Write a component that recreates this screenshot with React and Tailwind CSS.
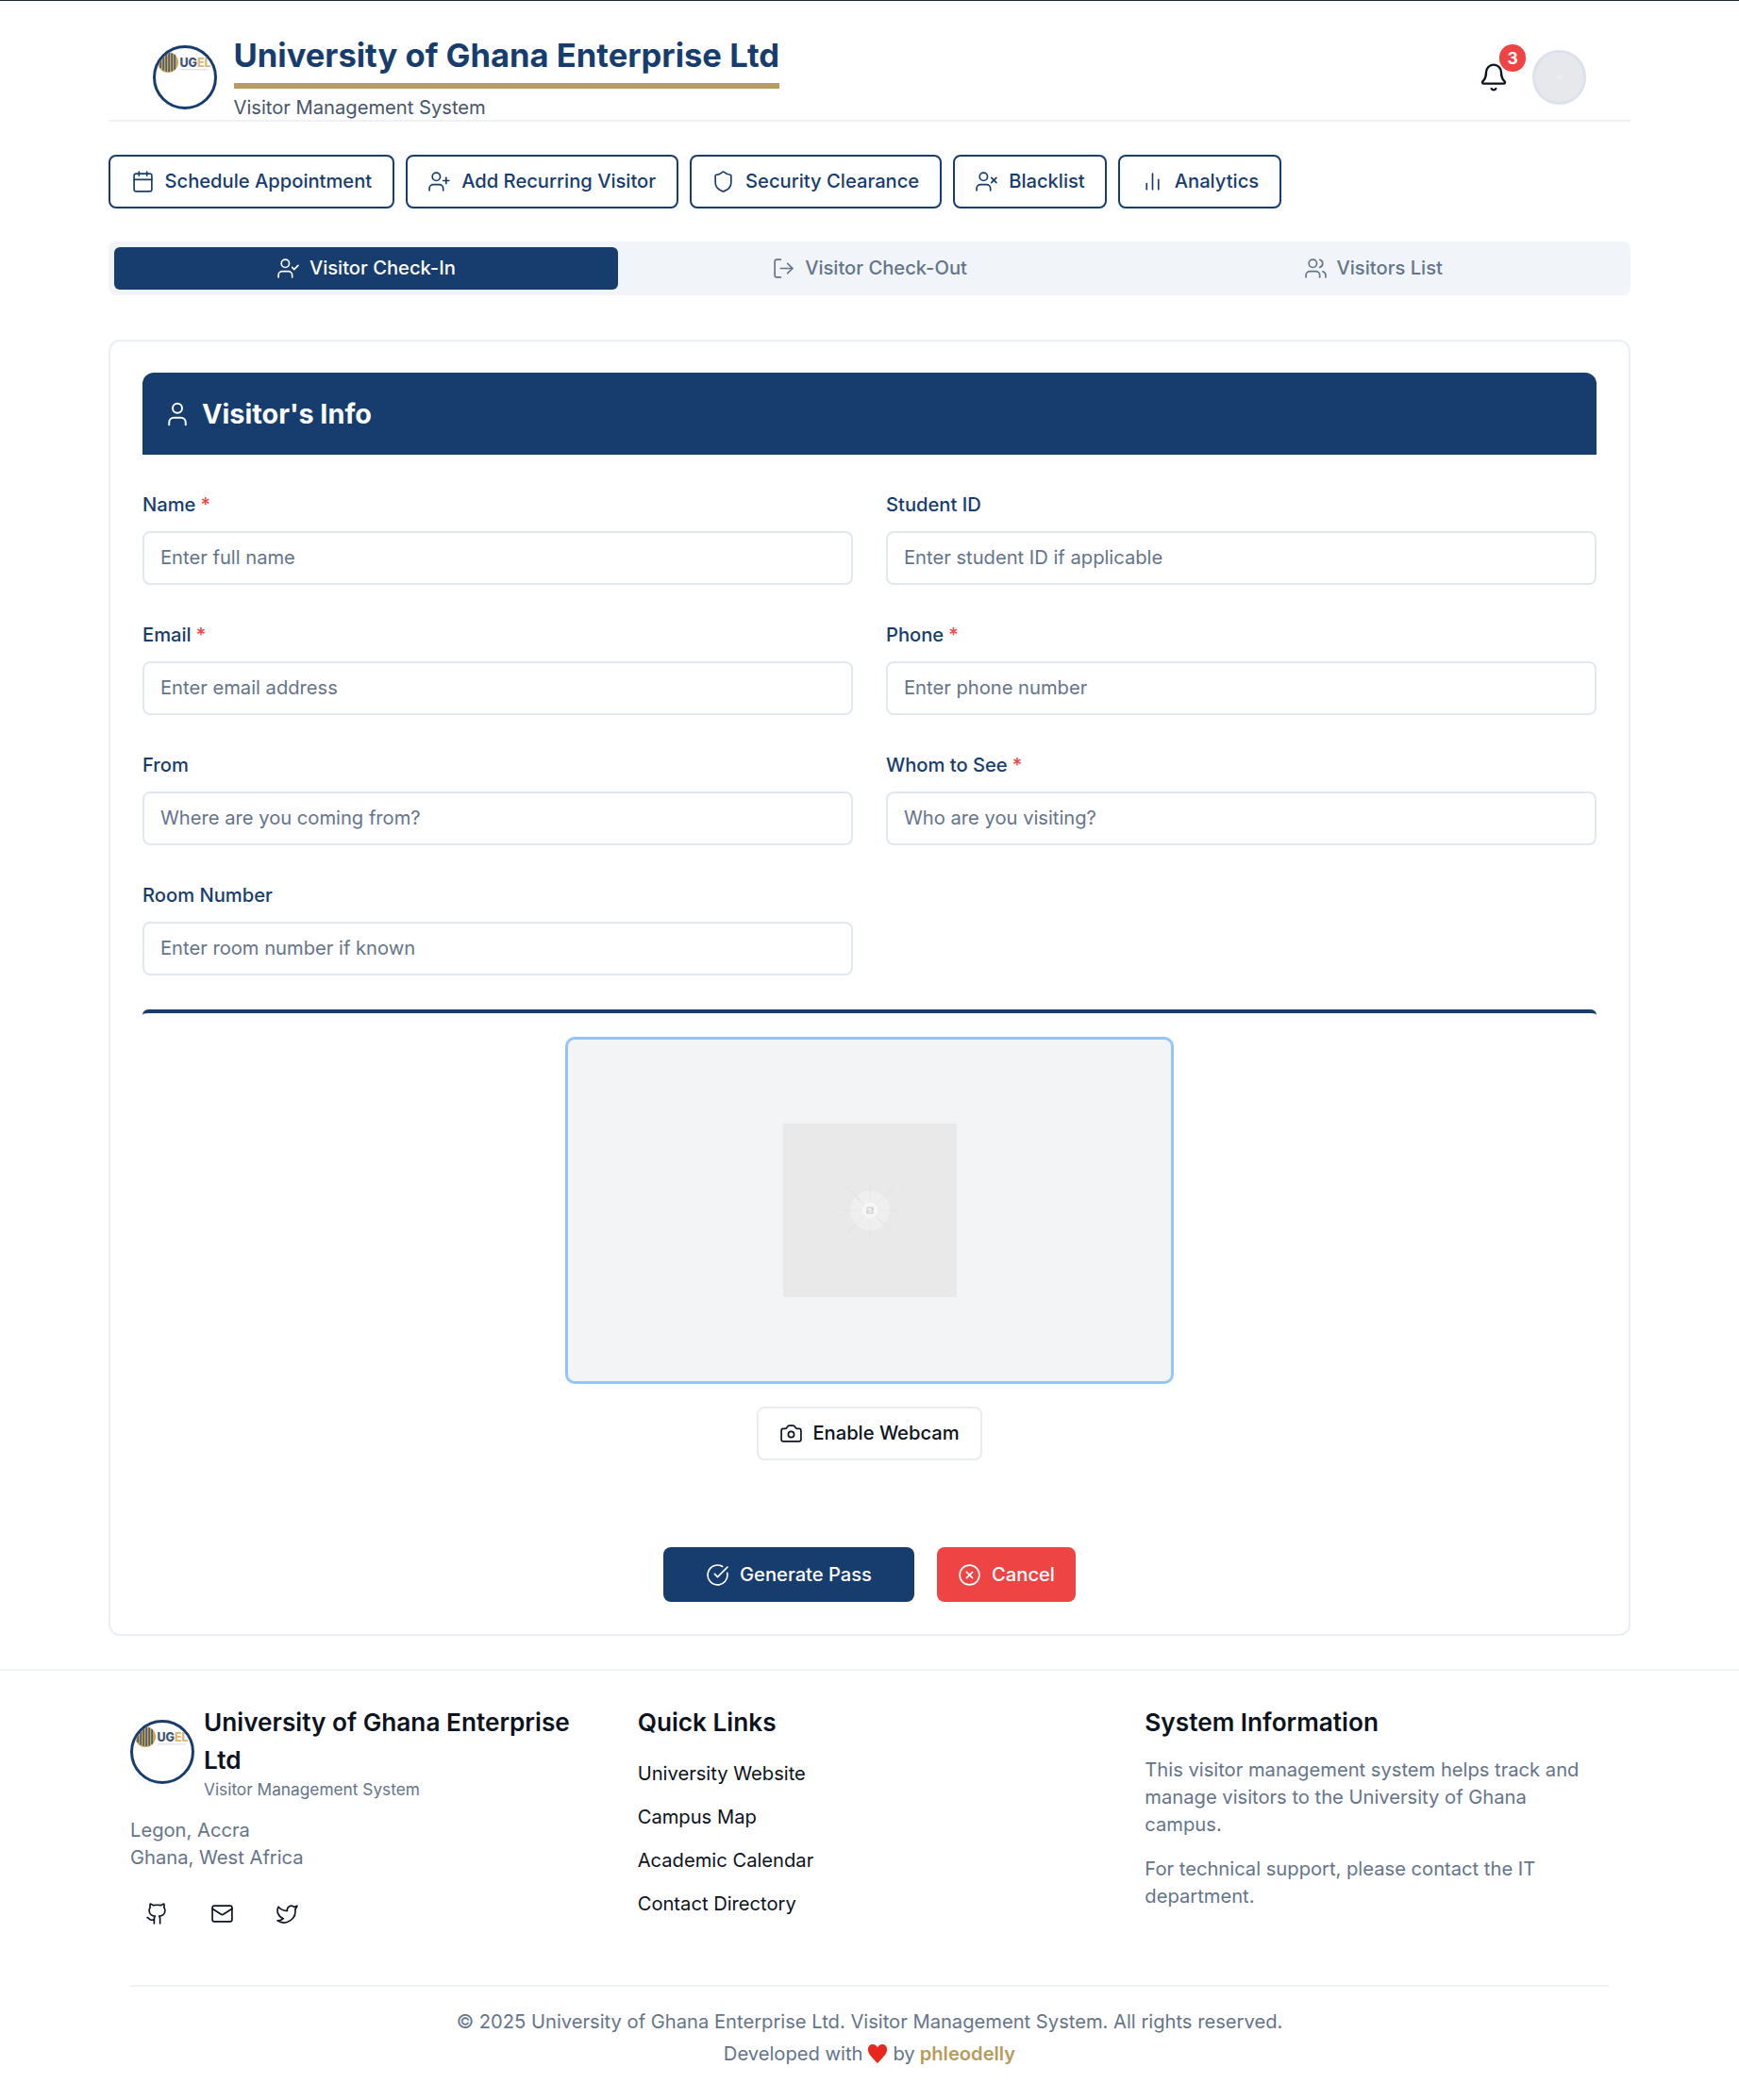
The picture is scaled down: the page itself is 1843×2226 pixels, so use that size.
import React from "react";
import {
  Bell, Calendar, UserPlus, Shield, UserX, UserCheck, LogOut, Users, User,
  Camera, CircleCheckBig, CircleX, Github, Mail, Twitter,
} from "lucide-react";

function BarsIcon({ size, strokeWidth }) {
  return (
    <svg width={size} height={size} viewBox="0 0 24 24" fill="none" stroke="currentColor" strokeWidth={strokeWidth} strokeLinecap="round" strokeLinejoin="round">
      <path d="M18 20V10" />
      <path d="M12 20V4" />
      <path d="M6 20v-6" />
    </svg>
  );
}

function Logo() {
  const stripes = [7.5, 10.5, 13.5, 16.5, 19.5, 22.5];
  return (
    <div className="w-[68px] h-[68px] shrink-0 rounded-full border-[3px] border-[#163d6e] bg-white overflow-hidden">
      <svg viewBox="3 3 62 62" className="w-[62px] h-[62px] block">
        <circle cx="16" cy="18" r="11" fill="#c9a45c" />
        {stripes.map((x) => {
          const half = Math.sqrt(121 - (x - 16) * (x - 16)) - 1;
          return <rect key={x} x={x} y={18 - half} width="1.2" height={half * 2} fill="#1f4272" />;
        })}
        <text x="28.500" y="22.500" fontFamily="Inter, sans-serif" fontSize="12.500" fontWeight="800" fill="#3d5379">
          UG<tspan fill="#d9b871">EL</tspan>
        </text>
        <rect x="29" y="25" width="30" height="1.500" fill="#e3e6ec" />
      </svg>
    </div>
  );
}

function ActionButton({ icon: Icon, children }) {
  return (
    <button className="h-[57px] flex items-center gap-[11px] px-[21.500px] rounded-[8px] border-2 border-[#163d6e] bg-white text-[#163d6e] text-[20.160px] font-medium">
      <Icon size={25} strokeWidth={1.6} />
      {children}
    </button>
  );
}

function Tab({ icon: Icon, active, children }) {
  return (
    <div className={active
      ? "flex-1 h-[45px] flex items-center justify-center gap-[10px] rounded-[6px] bg-[#163d6e] text-white text-[20.160px] font-medium"
      : "flex-1 h-[45px] flex items-center justify-center gap-[10px] text-[#64748b] text-[20.160px] font-medium"}>
      <Icon size={25} strokeWidth={1.6} />
      {children}
    </div>
  );
}

function Field({ label, required, placeholder }) {
  return (
    <div>
      <div className="h-[28px] flex items-center text-[20.160px] font-medium leading-[28px] text-[#163d6e]">
        {label}
        {required && <span className="ml-[5px] text-[#ef4444]">*</span>}
      </div>
      <div className="mt-[14px] h-[57px] flex items-center px-[17px] rounded-[8px] border-2 border-[#e2e8f0] bg-white text-[20.160px] text-[#64748b]">
        {placeholder}
      </div>
    </div>
  );
}

function Placeholder() {
  const rays = [0, 45, 90, 135, 180, 225, 270, 315];
  return (
    <div className="w-[184px] h-[184px] bg-[#e9e9e9] flex items-center justify-center">
      <svg viewBox="0 0 70 70" className="w-[70px] h-[70px]">
        {rays.map((a) => (
          <line key={a} x1="35" y1="35" x2="35" y2={a % 90 === 0 ? 5 : 0} stroke="#e2e2e2" strokeWidth="1"
            transform={`rotate(${a} 35 35)`} />
        ))}
        <circle cx="35" cy="35" r="21" fill="#efefef" />
        {rays.map((a) => (
          <line key={`i${a}`} x1="35" y1="35" x2="35" y2="14" stroke={a === 135 || a === 315 ? "#e2e2e2" : "#e9e9e9"} strokeWidth="1"
            transform={`rotate(${a} 35 35)`} />
        ))}
        <circle cx="35" cy="35" r="8.500" fill="#f6f6f6" />
        <rect x="32" y="32" width="6" height="6" fill="none" stroke="#b9b9b9" strokeWidth="0.8" />
        <path d="M32 37l2-2 1.500 1 2.500-3" fill="none" stroke="#b9b9b9" strokeWidth="0.7" />
      </svg>
    </div>
  );
}

export default function App() {
  return (
    <div className="min-h-[2226px] bg-white border-t border-[#1f2937]" style={{ fontFamily: "Inter, 'Liberation Sans', sans-serif" }}>
      <div className="mx-auto w-[1613px]">
        <header className="h-[128px] pt-[36px] flex items-center justify-between pl-[47px] pr-[47px] border-b-2 border-[#eef2f7]">
          <div className="flex items-center gap-[17.500px]">
            <Logo />
            <div>
              <div className="text-[34.560px] leading-[46px] font-bold text-[#163d6e] border-b-[6px] border-[#b89b5e] pb-[6px]">
                University of Ghana Enterprise Ltd
              </div>
              <div className="text-[20.160px] leading-[28px] mt-[6px] text-[#475569]">Visitor Management System</div>
            </div>
          </div>
          <div className="flex items-center gap-[25px]">
            <div className="relative w-[32px] h-[32px] text-[#0b1220]">
              <Bell size={32} strokeWidth={1.8} />
              <span className="absolute -top-[19px] left-[22px] w-[28px] h-[29px] rounded-full bg-[#ef4444] text-white text-[17.280px] font-bold flex items-center justify-center">3</span>
            </div>
            <div className="w-[57px] h-[58px] rounded-full border-[3px] border-[#dbe2ee] bg-[#e7e8ec] flex items-center justify-center">
              <span className="w-[6px] h-[6px] rounded-full bg-[#ededf0]" />
            </div>
          </div>
        </header>

        <div className="mt-[35px] flex gap-[12px]">
          <ActionButton icon={Calendar}>Schedule Appointment</ActionButton>
          <ActionButton icon={UserPlus}>Add Recurring Visitor</ActionButton>
          <ActionButton icon={Shield}>Security Clearance</ActionButton>
          <ActionButton icon={UserX}>Blacklist</ActionButton>
          <ActionButton icon={BarsIcon}>Analytics</ActionButton>
        </div>

        <div className="mt-[35px] h-[57px] p-[6px] rounded-[8px] bg-[#f1f4f9] flex">
          <Tab icon={UserCheck} active>Visitor Check-In</Tab>
          <Tab icon={LogOut}>Visitor Check-Out</Tab>
          <Tab icon={Users}>Visitors List</Tab>
        </div>

        <main className="mt-[47px] h-[1374px] rounded-[12px] border-2 border-[#eaeef5] bg-white px-[34px] pt-[33px]">
          <div className="h-[87px] rounded-t-[12px] bg-[#163d6e] flex items-center pl-[22px] gap-[11px] text-white">
            <User size={30} strokeWidth={1.6} />
            <span className="text-[28.800px] font-bold">Visitor's Info</span>
          </div>

          <div className="mt-[39px] grid grid-cols-2 gap-x-[35px] gap-y-[39px]">
            <Field label="Name" required placeholder="Enter full name" />
            <Field label="Student ID" placeholder="Enter student ID if applicable" />
            <Field label="Email" required placeholder="Enter email address" />
            <Field label="Phone" required placeholder="Enter phone number" />
            <Field label="From" placeholder="Where are you coming from?" />
            <Field label="Whom to See" required placeholder="Who are you visiting?" />
            <Field label="Room Number" placeholder="Enter room number if known" />
          </div>

          <div className="mt-[36px] h-[12px] -mb-[8px] border-t-4 border-[#163d6e] rounded-[12px]" />

          <div className="mt-[25px] flex flex-col items-center">
            <div className="w-[645px] h-[368px] rounded-[10px] border-[3px] border-[#93c5fd] bg-[#f3f4f6] flex items-center justify-center">
              <Placeholder />
            </div>
            <button className="mt-[24px] h-[57px] w-[239px] flex items-center justify-center gap-[10px] rounded-[8px] border-2 border-[#e8edf5] bg-white text-[20.160px] font-medium text-[#0b1220]">
              <Camera size={25} strokeWidth={1.6} />
              Enable Webcam
            </button>
            <div className="mt-[92px] flex gap-[24px]">
              <button className="h-[58px] w-[266px] flex items-center justify-center gap-[11px] rounded-[8px] bg-[#163d6e] text-white text-[20.160px] font-medium">
                <CircleCheckBig size={25} strokeWidth={1.6} />
                Generate Pass
              </button>
              <button className="h-[58px] w-[147px] flex items-center justify-center gap-[11px] rounded-[8px] bg-[#ef4444] text-white text-[20.160px] font-medium">
                <CircleX size={25} strokeWidth={1.6} />
                Cancel
              </button>
            </div>
          </div>
        </main>
      </div>

      <footer className="mt-[35px] border-t-2 border-[#eef2f7]">
        <div className="mx-auto w-[1567px] pt-[35px]">
          <div className="grid grid-cols-3 gap-x-[46px] h-[298px]">
            <div>
              <div className="flex gap-[10px]">
                <div className="pt-[17px]"><Logo /></div>
                <div>
                  <div className="text-[26.200px] leading-[40px] font-semibold text-[#0b1220]">University of Ghana Enterprise Ltd</div>
                  <div className="text-[17.280px] leading-[21px] text-[#64748b]">Visitor Management System</div>
                </div>
              </div>
              <div className="mt-[19px] text-[20.160px] leading-[28.500px] text-[#64748b]">
                <div>Legon, Accra</div>
                <div>Ghana, West Africa</div>
              </div>
              <div className="mt-[17px] flex gap-[13px] text-[#0b1220]">
                <span className="w-[56px] h-[56px] flex items-center justify-center"><Github size={25} strokeWidth={1.6} /></span>
                <span className="w-[56px] h-[56px] flex items-center justify-center"><Mail size={25} strokeWidth={1.6} /></span>
                <span className="w-[56px] h-[56px] flex items-center justify-center"><Twitter size={25} strokeWidth={1.6} /></span>
              </div>
            </div>
            <div>
              <div className="text-[26.200px] leading-[40px] font-semibold text-[#0b1220]">Quick Links</div>
              <div className="mt-[20px] flex flex-col gap-[18px] text-[20.160px] leading-[28px] text-[#0b1220]">
                <div>University Website</div>
                <div>Campus Map</div>
                <div>Academic Calendar</div>
                <div>Contact Directory</div>
              </div>
            </div>
            <div>
              <div className="text-[26.200px] leading-[40px] font-semibold text-[#0b1220]">System Information</div>
              <p className="mt-[15px] pr-[10px] text-[20.160px] leading-[29px] text-[#64748b]">
                This visitor management system helps track and manage visitors to the University of Ghana campus.
              </p>
              <p className="mt-[18px] pr-[10px] text-[20.160px] leading-[29px] text-[#64748b]">
                For technical support, please contact the IT department.
              </p>
            </div>
          </div>
          <div className="border-t-2 border-[#eef2f7] pt-[20px] text-center text-[20.160px] leading-[34px] text-[#64748b]">
            <div>© 2025 University of Ghana Enterprise Ltd. Visitor Management System. All rights reserved.</div>
            <div className="flex items-center justify-center gap-[5px]">
              Developed with
              <svg viewBox="0 0 24 24" className="w-[22px] h-[24px]" aria-hidden="true" preserveAspectRatio="none">
                <path d="M12 22C5 15.500 1 11.500 1 7.500 1 4 3.500 2 6.500 2 9 2 11 3.500 12 5.500 13 3.500 15 2 17.500 2 20.500 2 23 4 23 7.500 23 11.500 19 15.500 12 22z" fill="#e8271f" />
              </svg>
              by <span className="font-semibold text-[#b89b5e]">phleodelly</span>
            </div>
          </div>
        </div>
      </footer>
    </div>
  );
}
